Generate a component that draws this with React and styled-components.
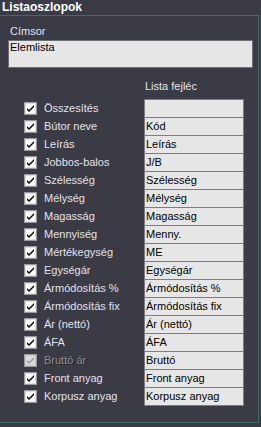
import React from "react";
import styled, { createGlobalStyle } from "styled-components";

const GlobalStyle = createGlobalStyle`
html, body {
  margin: 0;
  padding: 0;
  background: #3b3b45;
  overflow: hidden;
}
body {
  font-family: "Liberation Sans", Arial, sans-serif;
  font-size: 11px;
}
`;

const Page = styled.div`
width: 261px;
height: 427px;
background: #3b3b45;
display: flex;
flex-direction: column;
`;

const Title = styled.div`
height: 15px;
padding-left: 2px;
font-weight: bold;
font-size: 12px;
line-height: 14px;
color: #ffffff;
`;

const Frame = styled.div`
margin-left: -1px;
width: 258px;
height: 406px;
border: 1px solid #3e6d69;
display: flex;
flex-direction: column;
`;

const Label = styled.div`
color: #e2e2ec;
line-height: 13px;
`;

const CaptionLabel = styled(Label)`
margin: 9px 0 0 10px;
`;

const CaptionBox = styled.div`
margin: 2px 0 0 8px;
width: 242px;
height: 26px;
background: #e6e6e6;
border: 1px solid #6e6e74;
color: #000;
line-height: 13px;
padding-left: 1px;
`;

const HeaderLabel = styled(Label)`
margin: 12px 0 0 145px;
height: 19px;
`;

const Rows = styled.div`
display: flex;
flex-direction: column;
`;

const Row = styled.div`
display: flex;
align-items: center;
height: 18px;
padding-left: 24px;
`;

const CheckSlot = styled.div`
width: 13px;
height: 13px;
margin-right: 7px;
display: flex;
`;

const RowLabel = styled.span`
width: 100px;
color: ${(p) => (p.$disabled ? "#8e8e96" : "#e2e2ec")};
text-shadow: ${(p) => (p.$disabled ? "1px 1px 0 #26262c" : "none")};
white-space: nowrap;
line-height: 13px;
`;

const Field = styled.div`
align-self: flex-start;
height: 17px;
width: 97px;
background: #e6e6e6;
border: 1px solid #7c7c82;
color: #000;
line-height: 17px;
padding-left: 1px;
white-space: nowrap;
overflow: hidden;
`;

const Check = ({ disabled }) => (
  <svg width="13" height="13" viewBox="0 0 13 13">
    <rect x="0.5" y="0.5" width="12" height="12" fill={disabled ? "#dcdcdc" : "#ffffff"} stroke="#9a9aa0" />
    <rect x="1.5" y="1.5" width="10" height="10" fill="none" stroke={disabled ? "#c8c8c8" : "#e0e0e0"} />
    <path d="M3 6 L5 8 L10 3 L10 5 L5 10 L3 8 Z" fill={disabled ? "#9a9a9a" : "#000"} />
  </svg>
);

const columns = [
  ["Összesítés", ""],
  ["Bútor neve", "Kód"],
  ["Leírás", "Leírás"],
  ["Jobbos-balos", "J/B"],
  ["Szélesség", "Szélesség"],
  ["Mélység", "Mélység"],
  ["Magasság", "Magasság"],
  ["Mennyiség", "Menny."],
  ["Mértékegység", "ME"],
  ["Egységár", "Egységár"],
  ["Ármódosítás %", "Ármódosítás %"],
  ["Ármódosítás fix", "Ármódosítás fix"],
  ["Ár (nettó)", "Ár (nettó)"],
  ["ÁFA", "ÁFA"],
  ["Bruttó ár", "Bruttó", true],
  ["Front anyag", "Front anyag"],
  ["Korpusz anyag", "Korpusz anyag"],
];

export default function App() {
  return (
    <Page>
      <GlobalStyle />
      <Title>Listaoszlopok</Title>
      <Frame>
        <CaptionLabel>Címsor</CaptionLabel>
        <CaptionBox>Elemlista</CaptionBox>
        <HeaderLabel>Lista fejléc</HeaderLabel>
        <Rows>
          {columns.map(([name, header, disabled]) => (
            <Row key={name}>
              <CheckSlot>
                <Check disabled={disabled} />
              </CheckSlot>
              <RowLabel $disabled={disabled}>{name}</RowLabel>
              <Field>{header}</Field>
            </Row>
          ))}
        </Rows>
      </Frame>
    </Page>
  );
}
